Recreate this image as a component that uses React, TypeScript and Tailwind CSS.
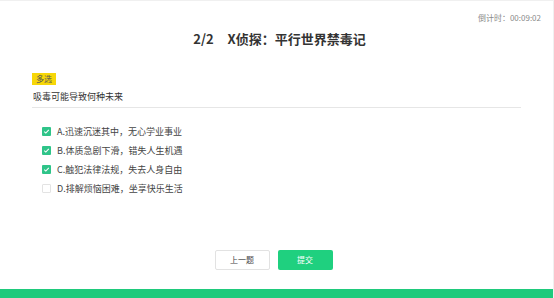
import React, { useState } from 'react';

interface Option {
  key: string;
  text: string;
}

const OPTIONS: Option[] = [
  { key: 'A', text: '迅速沉迷其中，无心学业事业' },
  { key: 'B', text: '体质急剧下滑，错失人生机遇' },
  { key: 'C', text: '触犯法律法规，失去人身自由' },
  { key: 'D', text: '排解烦恼困难，坐享快乐生活' },
];

const font = { fontFamily: '"Noto Sans CJK SC", "Liberation Sans", sans-serif' };

const App: React.FC = () => {
  const [checked, setChecked] = useState<string[]>(['A', 'B', 'C']);

  const toggle = (k: string) => {
    setChecked(prev => (prev.includes(k) ? prev.filter(x => x !== k) : [...prev, k]));
  };

  return (
    <div
      className="w-[554px] h-[298px] bg-white flex flex-col border-t border-r border-[#f0f0f0] overflow-hidden"
      style={font}
    >
      {/* Timer */}
      <div className="flex justify-end pr-[12px] pt-[12px]">
        <span className="text-[8px] leading-[10px] text-[#8a8a8a]">倒计时：00:09:02</span>
      </div>

      {/* Title */}
      <div className="mt-[8px] flex justify-center pl-[6px]">
        <h1 className="text-[13px] leading-[16px] font-bold text-[#333] flex gap-[14px]">
          <span>2/2</span>
          <span>X侦探：平行世界禁毒记</span>
        </h1>
      </div>

      {/* Question */}
      <div className="mt-[26px] pl-[32px] pr-[32px] flex flex-col">
        <div className="flex">
          <span className="bg-[#f7d708] text-[#555] text-[8px] leading-[12px] px-[4px]">多选</span>
        </div>
        <div className="mt-[6px] pl-[1px] pb-[4px] border-b border-[#e6e6e6] text-[9px] leading-[12px] text-[#333]">
          吸毒可能导致何种未来
        </div>
      </div>

      {/* Options */}
      <div className="mt-[14px] pl-[42px] flex flex-col">
        {OPTIONS.map(o => {
          const on = checked.includes(o.key);
          return (
            <label
              key={o.key}
              onClick={() => toggle(o.key)}
              className="h-[19px] flex items-center gap-[6px] cursor-pointer"
            >
              <span
                className={`w-[9px] h-[9px] rounded-[1px] flex items-center justify-center ${
                  on ? 'bg-[#2fc489]' : 'border border-[#e3e3e3] bg-white'
                }`}
              >
                {on && (
                  <svg viewBox="0 0 10 10" className="w-[7px] h-[7px]">
                    <path d="M1.8 5.2 L4 7.2 L8.3 2.8" fill="none" stroke="#fff" strokeWidth="1.6" />
                  </svg>
                )}
              </span>
              <span className="text-[9px] leading-[12px] text-[#444]">
                {o.key}.{o.text}
              </span>
            </label>
          );
        })}
      </div>

      {/* Buttons */}
      <div className="mt-[52px] flex justify-center gap-[8px] pr-[6px]">
        <button className="w-[55px] h-[20px] border border-[#e2e2e2] rounded-[2px] bg-white text-[8px] text-[#444]">
          上一题
        </button>
        <button className="w-[55px] h-[20px] rounded-[2px] bg-[#1fd07f] text-[8px] text-white">
          提交
        </button>
      </div>

      <div className="mt-auto h-[9px] bg-[#1fca7c]" />
    </div>
  );
};

export default App;
